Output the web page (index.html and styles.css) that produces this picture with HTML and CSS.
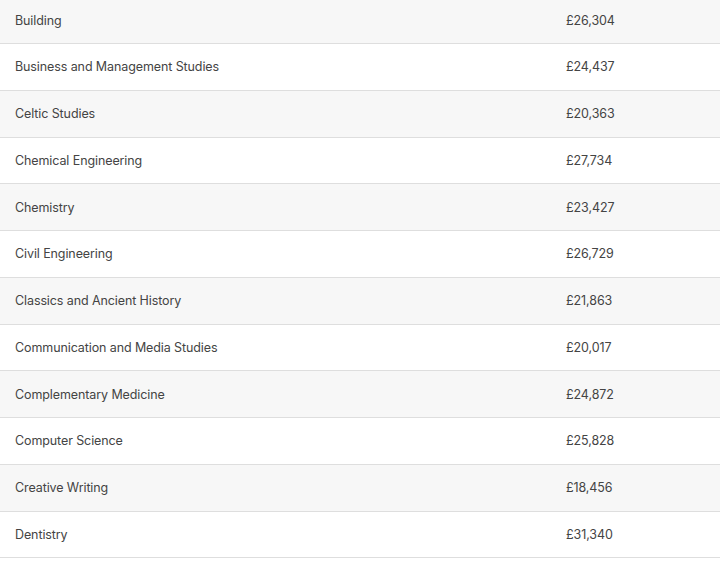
FILE: index.html
```html
<!DOCTYPE html>
<html lang="en">
<head>
<meta charset="utf-8">
<title>Salaries</title>
<link rel="stylesheet" href="styles.css">
</head>
<body>
<div class="table">
  <div class="row"><span class="subject">Building</span><span class="salary">£26,304</span></div>
  <div class="row"><span class="subject">Business and Management Studies</span><span class="salary">£24,437</span></div>
  <div class="row"><span class="subject">Celtic Studies</span><span class="salary">£20,363</span></div>
  <div class="row"><span class="subject">Chemical Engineering</span><span class="salary">£27,734</span></div>
  <div class="row"><span class="subject">Chemistry</span><span class="salary">£23,427</span></div>
  <div class="row"><span class="subject">Civil Engineering</span><span class="salary">£26,729</span></div>
  <div class="row"><span class="subject">Classics and Ancient History</span><span class="salary">£21,863</span></div>
  <div class="row"><span class="subject">Communication and Media Studies</span><span class="salary">£20,017</span></div>
  <div class="row"><span class="subject">Complementary Medicine</span><span class="salary">£24,872</span></div>
  <div class="row"><span class="subject">Computer Science</span><span class="salary">£25,828</span></div>
  <div class="row"><span class="subject">Creative Writing</span><span class="salary">£18,456</span></div>
  <div class="row"><span class="subject">Dentistry</span><span class="salary">£31,340</span></div>
</div>
</body>
</html>
```
FILE: styles.css
```css
html, body {
  margin: 0;
  padding: 0;
  background: #ffffff;
  overflow: hidden;
}
body {
  font-family: Inter, "Noto Sans", sans-serif;
  font-size: 12.5px;
  letter-spacing: -0.1px;
  color: #444444;
}
.table {
  display: flex;
  flex-direction: column;
  margin-top: -2.7px;
}
.row {
  display: flex;
  align-items: center;
  height: 45.75px;
  border-bottom: 1px solid #dedede;
  padding-left: 15px;
}
.row:nth-child(odd) {
  background: #f7f7f7;
}
.subject {
  width: 551px;
}
.salary {
  flex: none;
}
```
